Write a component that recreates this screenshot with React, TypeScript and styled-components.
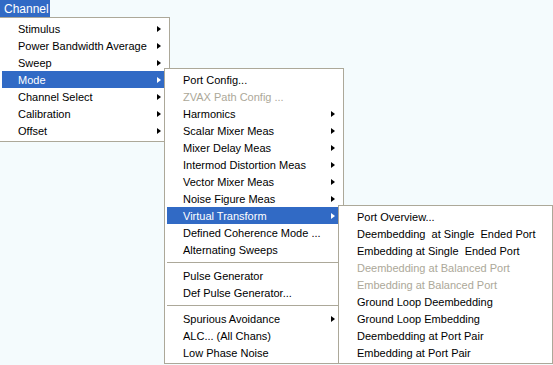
import styled, { createGlobalStyle } from "styled-components";

const GlobalStyle = createGlobalStyle`
  html, body {
    margin: 0;
    padding: 0;
    background: #f4fbfd;
    font-family: Tahoma, "Liberation Sans", Arial, sans-serif;
    font-size: 11px;
  }
  #root {
    width: 553px;
    height: 365px;
  }
`;

const Screen = styled.div`
  position: relative;
  width: 553px;
  height: 365px;
  overflow: hidden;
  background: #f4fbfd;
`;

const MenuBar = styled.div`
  display: flex;
  height: 17px;
`;

const BarItem = styled.div`
  display: flex;
  align-items: center;
  width: 50px;
  padding-left: 4px;
  box-sizing: border-box;
  background: #316ac5;
  color: #fff;
  font-size: 12px;
`;

const Menu = styled.div<{ $left: number; $top: number; $width: number }>`
  position: absolute;
  left: ${(p) => p.$left}px;
  top: ${(p) => p.$top}px;
  width: ${(p) => p.$width}px;
  box-sizing: border-box;
  display: flex;
  flex-direction: column;
  padding: 2px;
  background: #fff;
  border: 1px solid #aca899;
`;

const Row = styled.div<{ $active?: boolean; $disabled?: boolean }>`
  display: flex;
  align-items: center;
  height: 17px;
  padding: 0 6px 0 16px;
  white-space: pre;
  background: ${(p) => (p.$active ? "#316ac5" : "transparent")};
  color: ${(p) => (p.$active ? "#fff" : p.$disabled ? "#aca899" : "#000")};
`;

const Label = styled.span`
  flex: 1;
`;

const Arrow = styled.span<{ $active?: boolean }>`
  width: 0;
  height: 0;
  border-top: 3.5px solid transparent;
  border-bottom: 3.5px solid transparent;
  border-left: 4px solid ${(p) => (p.$active ? "#fff" : "#000")};
`;

const Separator = styled.div`
  height: 9px;
  display: flex;
  align-items: center;
  &::after {
    content: "";
    flex: 1;
    height: 1px;
    border-top: 1px solid #aca899;
  }
`;

type Item =
  | { sep: true }
  | { label: string; sub?: boolean; active?: boolean; disabled?: boolean; sep?: false };

const channelMenu: Item[] = [
  { label: "Stimulus", sub: true },
  { label: "Power Bandwidth Average", sub: true },
  { label: "Sweep", sub: true },
  { label: "Mode", sub: true, active: true },
  { label: "Channel Select", sub: true },
  { label: "Calibration", sub: true },
  { label: "Offset", sub: true },
];

const modeMenu: Item[] = [
  { label: "Port Config..." },
  { label: "ZVAX Path Config ...", disabled: true },
  { label: "Harmonics", sub: true },
  { label: "Scalar Mixer Meas", sub: true },
  { label: "Mixer Delay Meas", sub: true },
  { label: "Intermod Distortion Meas", sub: true },
  { label: "Vector Mixer Meas", sub: true },
  { label: "Noise Figure Meas", sub: true },
  { label: "Virtual Transform", sub: true, active: true },
  { label: "Defined Coherence Mode ..." },
  { label: "Alternating Sweeps" },
  { sep: true },
  { label: "Pulse Generator" },
  { label: "Def Pulse Generator..." },
  { sep: true },
  { label: "Spurious Avoidance", sub: true },
  { label: "ALC... (All Chans)" },
  { label: "Low Phase Noise" },
];

const transformMenu: Item[] = [
  { label: "Port Overview..." },
  { label: "Deembedding  at Single  Ended Port" },
  { label: "Embedding at Single  Ended Port" },
  { label: "Deembedding at Balanced Port", disabled: true },
  { label: "Embedding at Balanced Port", disabled: true },
  { label: "Ground Loop Deembedding" },
  { label: "Ground Loop Embedding" },
  { label: "Deembedding at Port Pair" },
  { label: "Embedding at Port Pair" },
];

function MenuItems({ items }: { items: Item[] }) {
  return (
    <>
      {items.map((it, i) =>
        it.sep ? (
          <Separator key={i} />
        ) : (
          <Row key={i} $active={it.active} $disabled={it.disabled}>
            <Label>{it.label}</Label>
            {it.sub && <Arrow $active={it.active} />}
          </Row>
        )
      )}
    </>
  );
}

export default function App() {
  return (
    <>
      <GlobalStyle />
      <Screen>
        <MenuBar>
          <BarItem>Channel</BarItem>
        </MenuBar>
        <Menu $left={-1} $top={17} $width={171}>
          <MenuItems items={channelMenu} />
        </Menu>
        <Menu $left={164} $top={68} $width={180}>
          <MenuItems items={modeMenu} />
        </Menu>
        <Menu $left={338} $top={205} $width={215}>
          <MenuItems items={transformMenu} />
        </Menu>
      </Screen>
    </>
  );
}
